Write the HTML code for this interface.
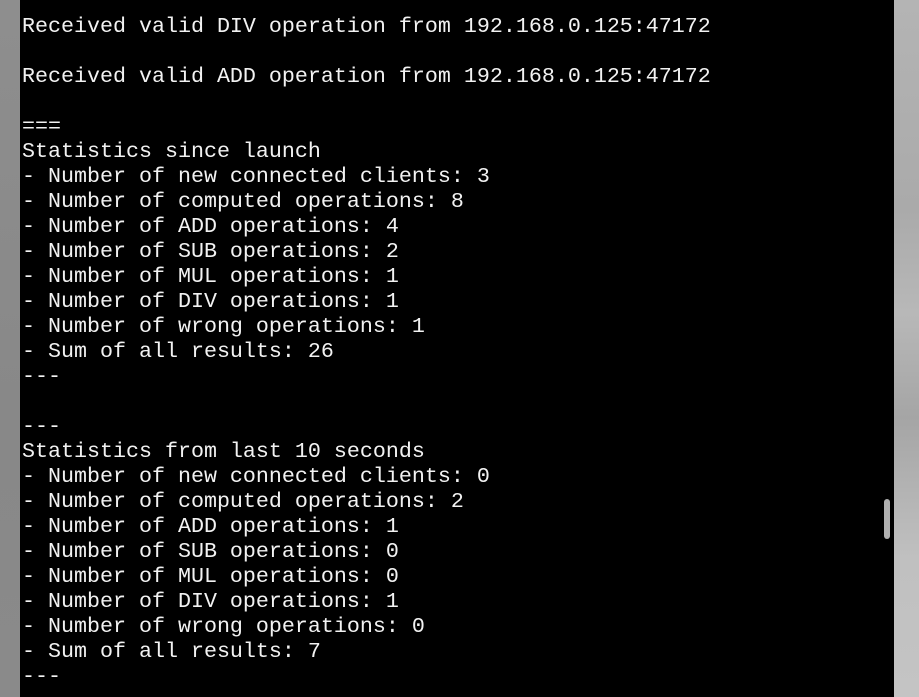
<!DOCTYPE html>
<html><head><meta charset="utf-8"><style>
html,body{margin:0;padding:0;width:919px;height:697px;overflow:hidden;background:#bdbdbd;}
.l{position:absolute;left:0;top:0;width:20px;height:697px;background:linear-gradient(#8e8e8e,#888 60%,#8a8a8a);}
.r{position:absolute;left:894px;top:0;width:25px;height:697px;background:linear-gradient(#b4b4b4,#aaa 30%,#b8b8b8 45%,#a5a5a5 60%,#c0c0c0 80%,#c4c4c4);}
.t{position:absolute;left:20px;top:0;width:874px;height:697px;background:#000;}
pre{position:absolute;left:22px;top:14px;margin:0;font-family:"Liberation Mono",monospace;font-size:21.66px;line-height:25px;color:#f2f2f2;}
.sb{position:absolute;left:884px;top:499px;width:6px;height:40px;border-radius:3px;background:#b0b0b0;}
</style></head><body>
<div class="l"></div><div class="r"></div><div class="t"></div>
<pre>Received valid DIV operation from 192.168.0.125:47172

Received valid ADD operation from 192.168.0.125:47172

===
Statistics since launch
- Number of new connected clients: 3
- Number of computed operations: 8
- Number of ADD operations: 4
- Number of SUB operations: 2
- Number of MUL operations: 1
- Number of DIV operations: 1
- Number of wrong operations: 1
- Sum of all results: 26
---

---
Statistics from last 10 seconds
- Number of new connected clients: 0
- Number of computed operations: 2
- Number of ADD operations: 1
- Number of SUB operations: 0
- Number of MUL operations: 0
- Number of DIV operations: 1
- Number of wrong operations: 0
- Sum of all results: 7
---</pre>
<div class="sb"></div>
</body></html>
